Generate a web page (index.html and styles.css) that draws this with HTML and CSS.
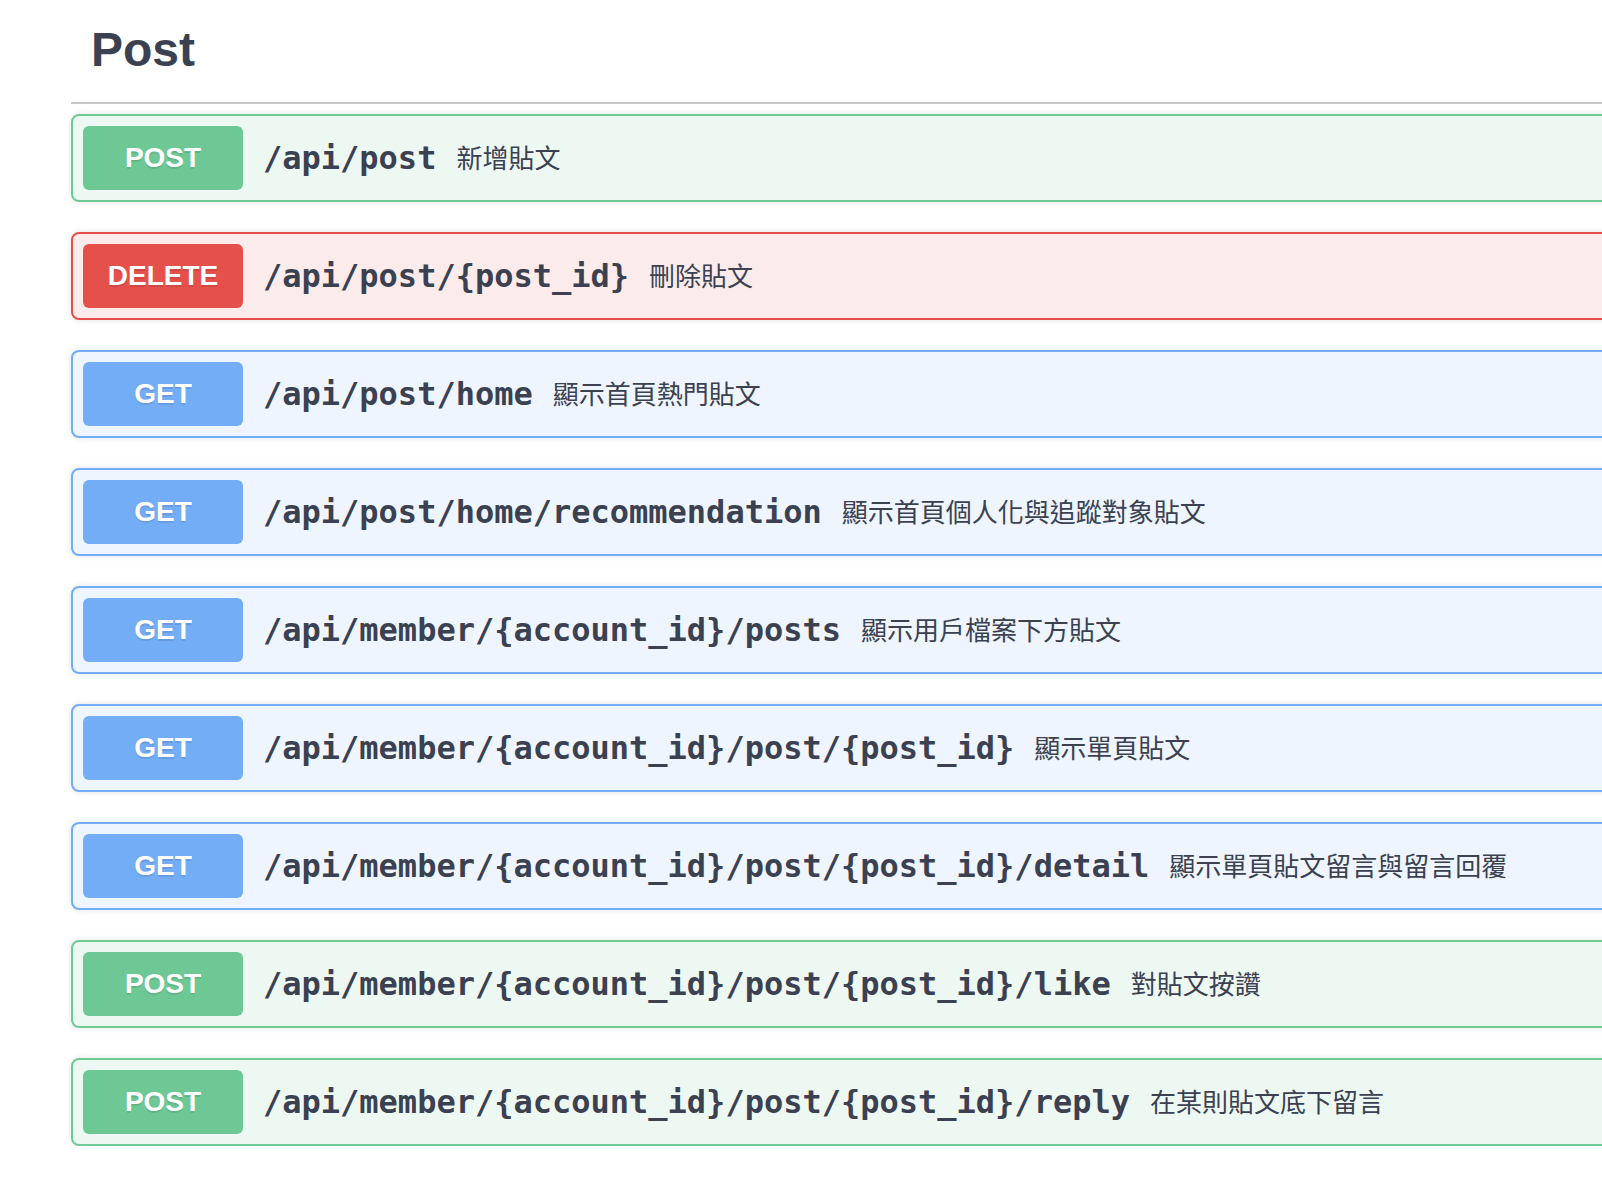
FILE: index.html
```html
<!DOCTYPE html>
<html lang="zh-Hant">
<head>
<meta charset="utf-8">
<title>Post</title>
<link rel="stylesheet" href="styles.css">
</head>
<body>
<section class="tag-section">
  <h3 class="tag-title"><span>Post</span></h3>
  <div class="ops">
    <div class="op op-post">
      <span class="method">POST</span>
      <span class="path">/api/post</span>
      <span class="desc">新增貼文</span>
    </div>
    <div class="op op-delete">
      <span class="method">DELETE</span>
      <span class="path">/api/post/{post_id}</span>
      <span class="desc">刪除貼文</span>
    </div>
    <div class="op op-get">
      <span class="method">GET</span>
      <span class="path">/api/post/home</span>
      <span class="desc">顯示首頁熱門貼文</span>
    </div>
    <div class="op op-get">
      <span class="method">GET</span>
      <span class="path">/api/post/home/recommendation</span>
      <span class="desc">顯示首頁個人化與追蹤對象貼文</span>
    </div>
    <div class="op op-get">
      <span class="method">GET</span>
      <span class="path">/api/member/{account_id}/posts</span>
      <span class="desc">顯示用戶檔案下方貼文</span>
    </div>
    <div class="op op-get">
      <span class="method">GET</span>
      <span class="path">/api/member/{account_id}/post/{post_id}</span>
      <span class="desc">顯示單頁貼文</span>
    </div>
    <div class="op op-get">
      <span class="method">GET</span>
      <span class="path">/api/member/{account_id}/post/{post_id}/detail</span>
      <span class="desc">顯示單頁貼文留言與留言回覆</span>
    </div>
    <div class="op op-post">
      <span class="method">POST</span>
      <span class="path">/api/member/{account_id}/post/{post_id}/like</span>
      <span class="desc">對貼文按讚</span>
    </div>
    <div class="op op-post">
      <span class="method">POST</span>
      <span class="path">/api/member/{account_id}/post/{post_id}/reply</span>
      <span class="desc">在某則貼文底下留言</span>
    </div>
  </div>
</section>
</body>
</html>
```

FILE: styles.css
```css
html, body {
  margin: 0;
  padding: 0;
  background: #ffffff;
  overflow: hidden;
}

body {
  font-family: "Liberation Sans", Arial, sans-serif;
  color: #3b4151;
}

.tag-section {
  margin-left: 71px;
  width: 1600px;
}

.tag-title {
  margin: 0 0 10px 0;
  padding: 23px 0 25px 20px;
  font-size: 48px;
  line-height: 54px;
  font-weight: 700;
  color: #3b4151;
  border-bottom: 2px solid #c8c8cb;
}

.ops {
  display: flex;
  flex-direction: column;
  gap: 30px;
}

.op {
  display: flex;
  align-items: center;
  box-sizing: border-box;
  height: 88px;
  padding: 10px;
  border: 2px solid #000;
  border-radius: 8px;
  box-shadow: 0 0 6px rgba(0, 0, 0, 0.12);
}

.method {
  box-sizing: border-box;
  flex: 0 0 auto;
  display: flex;
  align-items: center;
  justify-content: center;
  width: 160px;
  height: 64px;
  border-radius: 6px;
  color: #ffffff;
  font-family: "Liberation Sans", Arial, sans-serif;
  font-size: 28px;
  font-weight: 700;
  text-shadow: 0 2px 0 rgba(0, 0, 0, 0.1);
}

.path {
  padding: 0 20px;
  font-family: "DejaVu Sans Mono", "Liberation Mono", monospace;
  font-size: 32px;
  font-weight: 700;
  color: #3b4151;
  white-space: nowrap;
}

.desc {
  margin-bottom: 4px;
  font-family: "Noto Sans CJK TC", "Noto Sans CJK SC", sans-serif;
  font-size: 26px;
  color: #3b4151;
  white-space: nowrap;
}

.op-post {
  border-color: #6fca97;
  background: #eef8f3;
}
.op-post .method {
  background: #6dc895;
}

.op-delete {
  border-color: #e5504b;
  background: #fcebeb;
}
.op-delete .method {
  background: #e5504b;
}

.op-get {
  border-color: #73adf6;
  background: #eef5fe;
}
.op-get .method {
  background: #73adf6;
}
```
